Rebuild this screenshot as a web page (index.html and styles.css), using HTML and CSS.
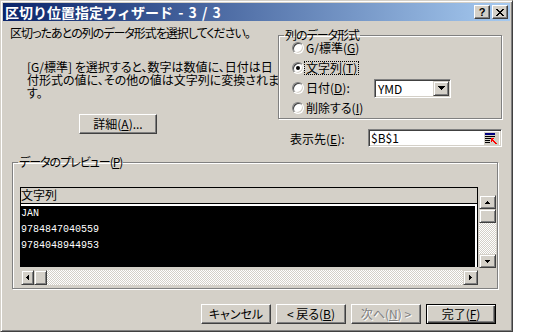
FILE: index.html
```html
<!DOCTYPE html>
<html lang="ja">
<head>
    <meta charset="UTF-8">
    <title>区切り位置指定ウィザード - 3 / 3</title>
    <link rel="stylesheet" href="styles.css">
</head>
<body>
    <div class="dialog">
        <div class="titlebar">
            <span class="title">区切り位置指定ウィザード - 3 / 3</span>
            <div class="caption-buttons">
                <span class="cap-btn">?</span>
                <span class="cap-btn">
                    <svg width="8" height="7" viewBox="0 0 8 7" shape-rendering="crispEdges"><path d="M0 0h2v1h-2zM6 0h2v1h-2zM1 1h2v1h-2zM5 1h2v1h-2zM2 2h4v1h-4zM3 3h2v1h-2zM2 4h4v1h-4zM1 5h2v1h-2zM5 5h2v1h-2zM0 6h2v1h-2zM6 6h2v1h-2z" fill="#000"/></svg>
                </span>
            </div>
        </div>

        <div class="top">
            <div class="left">
                <p class="lead">区切ったあとの列のデータ形式を選択してください。</p>
                <p class="note">[G/標準] を選択すると、数字は数値に、日付は日<br>付形式の値に、その他の値は文字列に変換されま<br>す。</p>
                <button class="btn detail-btn">詳細(<u>A</u>)...</button>
            </div>

            <div class="right">
                <fieldset class="group format-group">
                    <legend>列のデータ形式</legend>
                    <div class="radio-list">
                        <div class="radio-row"><span class="radio"></span><span class="radio-label">G/標準(<u>G</u>)</span></div>
                        <div class="radio-row"><span class="radio checked"></span><span class="radio-label focused">文字列(<u>T</u>)</span></div>
                        <div class="radio-row">
                            <span class="radio"></span><span class="radio-label">日付(<u>D</u>):</span>
                            <div class="combo">
                                <span class="combo-value">YMD</span>
                                <span class="combo-btn">
                                    <svg width="7" height="4" viewBox="0 0 7 4" shape-rendering="crispEdges"><path d="M0 0h7v1h-1v1h-1v1h-1v1h-1v-1h-1v-1h-1v-1h-1z" fill="#000"/></svg>
                                </span>
                            </div>
                        </div>
                        <div class="radio-row"><span class="radio"></span><span class="radio-label">削除する(<u>I</u>)</span></div>
                    </div>
                </fieldset>

                <div class="dest-row">
                    <span class="dest-label">表示先(<u>E</u>):</span>
                    <div class="ref-input">
                        <span>$B$1</span>
                        <span class="ref-btn">
                            <svg width="13" height="11" viewBox="0 0 13 11" shape-rendering="crispEdges">
                                <rect x="0" y="0" width="10" height="2" fill="#000080"/>
                                <rect x="0" y="3" width="10" height="1" fill="#000"/>
                                <rect x="0" y="5" width="6" height="1" fill="#000"/>
                                <rect x="0" y="7" width="5" height="1" fill="#000"/>
                                <rect x="0" y="9" width="5" height="1" fill="#000"/>
                                <path d="M6 5h3v1h-1v1h1v1h1v1h1v1h1v1h-2v-1h-1v-1h-1v-1h-1v1h-1z" fill="#f00"/>
                            </svg>
                        </span>
                    </div>
                </div>
            </div>
        </div>

        <fieldset class="group preview-group">
            <legend>データのプレビュー(<u>P</u>)</legend>
            <div class="preview-ctl">
                <div class="preview-data">
                    <div class="preview-head">文字列</div>
                    <div class="preview-rows">
                        <div>JAN</div>
                        <div>9784847040559</div>
                        <div>9784048944953</div>
                    </div>
                </div>
                <div class="vscroll">
                    <span class="sb-btn">
                        <svg width="5" height="3" viewBox="0 0 5 3" shape-rendering="crispEdges"><path d="M2 0h1v1h1v1h1v1h-5v-1h1v-1h1z" fill="#000"/></svg>
                    </span>
                    <span class="sb-btn"></span>
                    <span class="sb-track"></span>
                    <span class="sb-btn">
                        <svg width="5" height="3" viewBox="0 0 5 3" shape-rendering="crispEdges"><path d="M0 0h5v1h-1v1h-1v1h-1v-1h-1v-1h-1z" fill="#000"/></svg>
                    </span>
                </div>
                <div class="hscroll">
                    <span class="sb-btn">
                        <svg width="3" height="5" viewBox="0 0 3 5" shape-rendering="crispEdges"><path d="M2 0h1v5h-1v-1h-1v-1h-1v-1h1v-1h1z" fill="#000"/></svg>
                    </span>
                    <span class="sb-btn"></span>
                    <span class="sb-track"></span>
                    <span class="sb-btn">
                        <svg width="3" height="5" viewBox="0 0 3 5" shape-rendering="crispEdges"><path d="M0 0h1v1h1v1h1v1h-1v1h-1v1h-1z" fill="#000"/></svg>
                    </span>
                </div>
            </div>
        </fieldset>

        <div class="actions">
            <button class="btn">キャンセル</button>
            <button class="btn">&lt; 戻る(<u>B</u>)</button>
            <button class="btn" disabled>次へ(<u>N</u>) &gt;</button>
            <button class="btn default">完了(<u>F</u>)</button>
        </div>
    </div>
</body>
</html>
```

FILE: styles.css
```css
* {
    margin: 0;
    padding: 0;
    box-sizing: border-box;
}

body {
    background: #fff;
    font-family: "Noto Sans CJK JP", "Noto Sans", sans-serif;
    font-size: 12px;
    color: #000;
}

u {
    text-decoration: underline;
    text-underline-offset: 1px;
}

.dialog {
    width: 513px;
    height: 332px;
    background: #d4d0c8;
    border: 1px solid;
    border-color: #d4d0c8 #404040 #404040 #d4d0c8;
    box-shadow: inset 1px 1px #fff, inset -1px -1px #808080;
    padding: 2px;
    display: flex;
    flex-direction: column;
    font-feature-settings: "palt";
}

/* title bar */
.titlebar {
    height: 18px;
    flex-shrink: 0;
    background: linear-gradient(to right, #0a246a, #a6caf0);
    display: flex;
    align-items: center;
    justify-content: space-between;
    padding: 0 2px;
}

.title {
    color: #fff;
    font-weight: bold;
    font-size: 14px;
    line-height: 18px;
    word-spacing: 2px;
    font-feature-settings: normal;
}

.caption-buttons {
    display: flex;
    gap: 2px;
}

.cap-btn {
    width: 16px;
    height: 14px;
    background: #d4d0c8;
    border: 1px solid;
    border-color: #fff #404040 #404040 #fff;
    box-shadow: inset -1px -1px #808080;
    display: flex;
    align-items: center;
    justify-content: center;
    font-family: "Liberation Sans", sans-serif;
    font-weight: bold;
    font-size: 11px;
    line-height: 12px;
}

/* buttons */
.btn {
    font-family: inherit;
    font-size: 12px;
    font-feature-settings: "palt";
    color: #000;
    width: 70px;
    height: 20px;
    background: #d4d0c8;
    border: 1px solid;
    border-color: #fff #404040 #404040 #fff;
    box-shadow: inset -1px -1px #808080;
    line-height: 16px;
}

.btn:disabled {
    color: #808080;
    text-shadow: 1px 1px #fff;
}

.btn.default {
    border-color: #000;
    box-shadow: inset 1px 1px #fff, inset -1px -1px #404040, inset -2px -2px #808080;
}

/* upper part */
.top {
    display: flex;
    height: 126px;
    flex-shrink: 0;
}

.left {
    width: 275px;
    padding-left: 7px;
}

.lead {
    margin-top: 5px;
    line-height: 14px;
    letter-spacing: -1px;
    white-space: nowrap;
}

.note {
    margin: 20px 0 0 17px;
    line-height: 13px;
    white-space: nowrap;
}

.detail-btn {
    width: 78px;
    margin: 15px 0 0 69px;
}

.right {
    width: 224px;
}

.group {
    border: 1px solid #808080;
    box-shadow: inset 1px 1px #fff, 1px 1px #fff;
    min-inline-size: 0;
}

.group legend {
    margin-left: 5px;
    padding: 0 1px;
    line-height: 12px;
    letter-spacing: -1px;
}

.format-group {
    margin-top: 8px;
    height: 90px;
}

.radio-list {
    display: grid;
    grid-template-rows: 17px 20px 20px 20px;
}

.radio-row {
    display: flex;
    align-items: center;
    padding-left: 13px;
}

.radio-row:first-child {
    align-items: flex-start;
}

.radio-row:first-child .radio {
    margin-top: 1px;
}

.radio {
    width: 12px;
    height: 12px;
    border-radius: 50%;
    background: #fff;
    border: 1px solid;
    border-color: #808080 #fff #fff #808080;
    box-shadow: inset 1px 1px #404040, inset -1px -1px #d4d0c8;
    display: flex;
    align-items: center;
    justify-content: center;
}

.radio.checked::after {
    content: "";
    width: 4px;
    height: 4px;
    border-radius: 50%;
    background: #000;
}

.radio-label {
    padding: 0 1px;
    border: 1px dotted transparent;
    line-height: 12px;
}

.radio-label.focused {
    border-color: #000;
}

.combo {
    margin: 0 50px 0 auto;
    width: 77px;
    height: 19px;
    background: #fff;
    border: 1px solid;
    border-color: #808080 #fff #fff #808080;
    box-shadow: inset 1px 1px #404040, inset -1px -1px #d4d0c8;
    padding: 1px;
    display: flex;
    align-items: center;
}

.combo-value {
    flex: 1;
    padding-left: 2px;
    line-height: 15px;
}

.combo-btn {
    width: 16px;
    height: 15px;
    background: #d4d0c8;
    border: 1px solid;
    border-color: #d4d0c8 #404040 #404040 #d4d0c8;
    box-shadow: inset 1px 1px #fff, inset -1px -1px #808080;
    display: flex;
    align-items: center;
    justify-content: center;
}

.dest-row {
    display: flex;
    align-items: center;
    margin-top: 10px;
    padding-left: 12px;
}

.dest-label {
    width: 78px;
}

.ref-input {
    width: 134px;
    height: 18px;
    background: #fff;
    border: 1px solid;
    border-color: #808080 #fff #fff #808080;
    box-shadow: inset 1px 1px #404040, inset -1px -1px #d4d0c8;
    padding: 1px 2px 1px 2px;
    display: flex;
    align-items: center;
    justify-content: space-between;
    line-height: 14px;
}

.ref-btn {
    width: 15px;
    height: 13px;
    background: #d4d0c8;
    display: flex;
    align-items: center;
    justify-content: center;
}

/* preview */
.preview-group {
    margin: 9px 0 0 9px;
    width: 486px;
    padding-bottom: 3px;
}

.preview-ctl {
    display: grid;
    grid-template-columns: 458px 17px;
    grid-template-rows: 80px 15px;
    column-gap: 1px;
    row-gap: 3px;
    margin: 19px 0 0 7px;
}

.preview-data {
    background: #000;
    border: 1px solid #000;
    border-bottom: 0;
    display: flex;
    flex-direction: column;
}

.preview-head {
    height: 16px;
    background: #d4d0c8;
    border-bottom: 1px solid #000;
    line-height: 14px;
}

.preview-rows {
    flex: 1;
    border-top: 2px solid #fff;
    border-right: 2px solid #fff;
    color: #fff;
    font-family: "Liberation Mono", monospace;
    font-size: 10px;
    line-height: 16px;
}

.vscroll {
    margin-top: 8px;
    height: 73px;
    display: grid;
    grid-template-rows: 14px 14px 1fr 14px;
}

.hscroll {
    display: grid;
    grid-template-columns: 13px 13px 1fr 15px;
    padding-left: 1px;
}

.sb-btn {
    background: #d4d0c8;
    border: 1px solid;
    border-color: #d4d0c8 #404040 #404040 #d4d0c8;
    box-shadow: inset 1px 1px #fff, inset -1px -1px #808080;
    display: flex;
    align-items: center;
    justify-content: center;
}

.sb-track {
    background: repeating-conic-gradient(#d4d0c8 0 25%, #fff 0 50%) 0 0 / 2px 2px;
}

.actions {
    display: flex;
    justify-content: flex-end;
    gap: 5px;
    margin-top: 15px;
    padding-right: 14px;
}
```
